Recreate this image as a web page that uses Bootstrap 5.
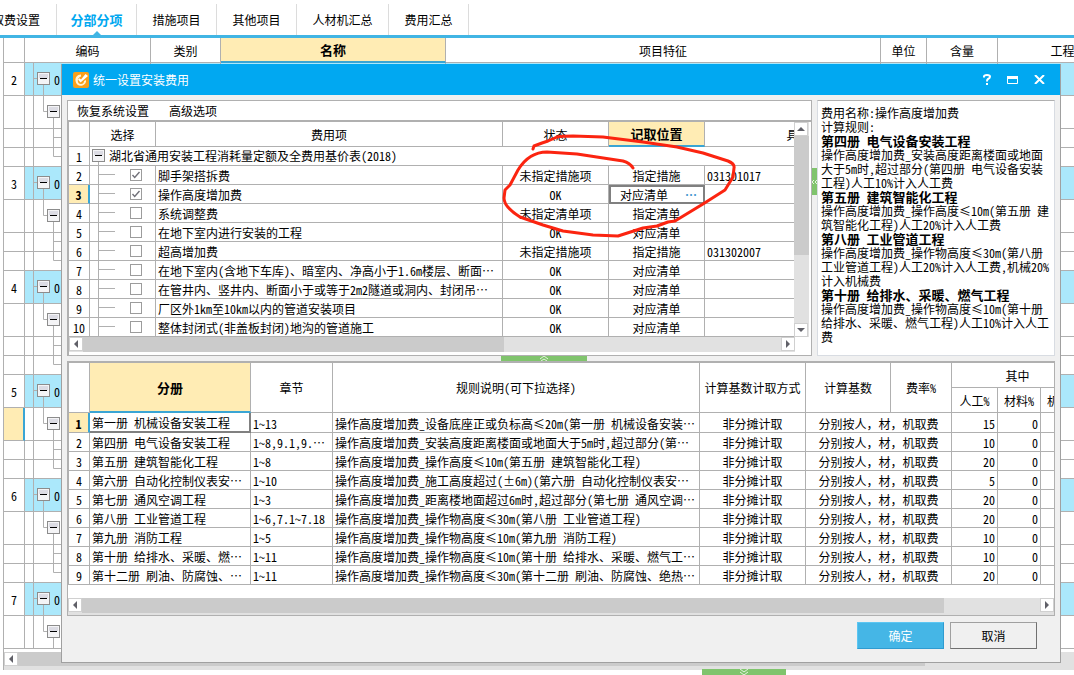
<!DOCTYPE html>
<html lang="zh-CN">
<head>
<meta charset="utf-8">
<meta name="viewport" content="width=device-width, initial-scale=1">
<title>统一设置安装费用</title>
<link href="https://cdn.jsdelivr.net/npm/bootstrap@5.3.0/dist/css/bootstrap.min.css" rel="stylesheet">
<style>
  :root { --line: #b0b0b0; --sel: #ffecb4; --accent: #41b5e4; --mark: #3aa5d4; --tree: #abe8fb; }
  body { font-family: "Noto Sans Mono CJK SC", "Noto Sans CJK SC", sans-serif; font-size: 12px; line-height: 18px; color: #000; background: #fff; }
  button { font: inherit; color: inherit; background: none; border: 0; padding: 0; }
  b, .hot { font-size: 13px; font-weight: 700; }

  .tabs { height: 38px; padding-top: 4px; margin-left: -24px; border-bottom: 3px solid var(--accent); }
  .tabs a { width: 81px; line-height: 31px; text-align: center; color: #000; text-decoration: none; border-right: 1px solid #dcdcdc; flex: none; }
  .tabs a + a { width: 80px; }
  .tabs a.wide { width: 92px; }
  .tabs a.active { color: #00a8f0; font-weight: 700; font-size: 13px; position: relative; }
  .tabs a.active::after { content: ""; position: absolute; left: 50%; bottom: 0; margin-left: -4px; border: 4px solid transparent; border-top: 0; border-bottom-color: var(--accent); }

  .gridt { table-layout: fixed; border-collapse: separate; border-spacing: 0; }
  .gridt th, .gridt td { border-right: 1px solid var(--line); border-bottom: 1px solid var(--line); padding: 1px 2px 0; height: 19px; line-height: 17px; white-space: nowrap; overflow: hidden; }
  .gridt th { font-weight: 400; text-align: center; padding-top: 0; }
  .gridt th.hot { font-weight: 700; background: var(--sel); border-bottom: 2px solid var(--mark); }
  .gridt .num { text-align: center; padding-left: 0; padding-right: 0; }
  .gridt .num.on { background: var(--sel); border-right: 2px solid var(--mark); font-weight: 700; }

  .back { margin-left: 3px; border-left: 1px solid var(--line); overflow: hidden; }
  .back .gridt { width: calc(100% + 66px); }
  .back thead th { height: 25px; }
  .back .tall td { height: 33px; }
  .back td.tree { padding: 0; position: relative; }
  .back .root td + td { background: var(--tree); }
  .back .tree svg { display: block; }
  .back .tree span { position: absolute; left: 29px; top: 8px; }

  .win { position: absolute; left: 61px; right: 13px; top: 64px; background: #f0f0f0; border: 1px solid #a0a0a0; border-top: 0; }
  .titlebar { height: 31px; background: #01a8f1; color: #fff; padding: 0 15px 0 11px; }
  .winbody { padding: 5px 5px 13px; }
  .pane { background: #fff; border: 1px solid var(--line); overflow: hidden; }
  .toolbar { height: 20px; padding-left: 9px; border-bottom: 1px solid var(--line); }
  .frame { border-top: 1px solid var(--line); border-left: 1px solid var(--line); overflow: hidden; }
  .fees { width: calc(100% + 123px); }
  .fees th { height: 25px; }
  .fees td.opt { padding: 0; }
  .opt input { appearance: none; width: 12px; height: 12px; border: 1px solid #9c9c9c; background: #fff; margin: 0 0 0 15px; }
  .opt input:checked { background: #fff url("data:image/svg+xml,%3Csvg xmlns='http://www.w3.org/2000/svg' viewBox='0 0 10 10'%3E%3Cpath d='M1.5 5l2.2 2.4L8.5 2' fill='none' stroke='%23707078' stroke-width='1.4'/%3E%3C/svg%3E") center / 10px; }
  .gridt td.edit { padding: 0 6px 0 9px; border: 2px solid #808080; line-height: 15px; }
  .gridt td.cur { border-bottom: 2px solid #808080; border-right: 2px solid #808080; }
  .dots { color: #4496d0; font-weight: 700; }

  .vbar { width: 15px; background: #e1e1e1; flex: none; }
  .vgap { width: 2px; flex: none; }
  .hrow { padding-bottom: 3px; }
  .hbar { height: 15px; background: #e1e1e1; }
  .arrow { width: 14px; height: 14px; background: #fff; border: 1px solid #d0d0d0; display: flex; align-items: center; justify-content: center; flex: none; }
  .thumb { background: #cbcbcb; }
  .grip { background: #80c46d; display: flex; align-items: center; justify-content: center; }
  .note { width: 238px; border-color: #d8dce2; border-top-color: var(--line); padding: 5px 3px; line-height: 14px; white-space: nowrap; flex: none; }
  .rules { width: calc(100% + 30px); }
  .act { width: 87px; height: 27px; border: 1px solid #a0a0a0; border-right-color: #707070; border-bottom-color: #707070; }
  .act.ok { background: #45b6e6; color: #fff; border-color: #5cc6f2 #2f9bd0 #2f9bd0 #5cc6f2; }
  .buttons { gap: 6px; padding: 6px 18px 0 0; }
  .scribble { position: absolute; right: 320px; top: 66px; pointer-events: none; }
  .foot { height: 18px; margin-top: 3px; background: #e1e1e1; }
  .bottomgrip { width: 84px; height: 6px; margin: -1px 288px 0 auto; }
</style>
</head>
<body class="overflow-hidden">

<nav class="tabs d-flex">
  <a href="#">取费设置</a><a href="#" class="active">分部分项</a><a href="#">措施项目</a><a href="#">其他项目</a><a href="#" class="wide">人材机汇总</a><a href="#">费用汇总</a>
</nav>

<main>
  <div class="back">
    <table class="gridt">
      <colgroup><col style="width:21px"><col style="width:126px"><col style="width:70px"><col style="width:225px"><col><col style="width:46px"><col style="width:71px"><col style="width:142px"></colgroup>
      <thead><tr><th></th><th>编码</th><th>类别</th><th class="hot">名称</th><th>项目特征</th><th>单位</th><th>含量</th><th>工程量</th></tr></thead>
      <tbody id="items"></tbody>
    </table>
    <div class="foot d-flex">
      <span class="arrow"><svg width="4" height="8"><path d="M4 0v8L0 4z" fill="#606068"/></svg></span>
      <div class="thumb flex-grow-1 mb-1"></div><div style="width:149px"></div>
    </div>
  </div>
  <div class="grip bottomgrip"><svg width="8" height="6"><path d="M0 0l4 3 4-3M0 3l4 3 4-3" fill="none" stroke="#e4f4df"/></svg></div>
</main>

<section class="win" role="dialog" aria-labelledby="caption">
  <header class="titlebar d-flex align-items-center">
    <svg width="16" height="16" viewBox="0 0 16 16"><rect width="16" height="16" rx="2" fill="#f9a01b"/><path d="M8 2.500C4 2.500 2 5.500 2.500 9c.5 4 4 5.500 7 4.500 2.500-1 4-3 3.500-5.500l-2 1c0 2-1 3-3 3C6 12 5 11 4.800 9 4.600 7 6 5 8 4.500z" fill="#fff4d8"/><path d="M5 7.500l2.500 3L15 4l-2.500-2L8 7.500 6.500 6.300z" fill="#fff"/></svg>
    <span id="caption" class="ms-1">统一设置安装费用</span>
    <button class="ms-auto d-flex" aria-label="帮助"><svg width="8" height="11"><path d="M1 3.500V2.500Q1 1 4 1t3 1.700Q7 4 5 5 4 5.500 4 7.500M4 9v2" fill="none" stroke="#fff" stroke-width="2"/></svg></button>
    <button class="d-flex mx-3" aria-label="最大化"><svg width="11" height="8"><path d="M.5.5h10v7H.5zM0 1.500h11" fill="none" stroke="#fff"/><path d="M0 0h11v3H0z" fill="#fff"/></svg></button>
    <button class="d-flex" aria-label="关闭"><svg width="11" height="9"><path d="M1 0l9 9M10 0L1 9" stroke="#fff" stroke-width="2"/></svg></button>
  </header>

  <div class="winbody">
    <div class="d-flex">
      <div class="pane flex-grow-1 overflow-hidden">
        <div class="toolbar d-flex gap-3 align-items-center"><button>恢复系统设置</button><button class="ms-1">高级选项</button></div>
        <div class="frame">
          <div class="d-flex">
            <div class="flex-grow-1 overflow-hidden">
              <table class="gridt fees">
                <colgroup><col style="width:21px"><col style="width:66px"><col><col style="width:106px"><col style="width:96px"><col style="width:212px"></colgroup>
                <thead><tr><th></th><th>选择</th><th>费用项</th><th>状态</th><th class="hot">记取位置</th><th>具体位置</th></tr></thead>
                <tbody id="fees"></tbody>
              </table>
            </div>
            <div class="vbar d-flex flex-column">
              <span class="arrow"><svg width="8" height="4"><path d="M0 4h8L4 0z" fill="#606068"/></svg></span>
              <div class="thumb" style="height:119px"></div>
              <span class="arrow mt-auto"><svg width="8" height="4"><path d="M0 0h8L4 4z" fill="#606068"/></svg></span>
            </div>
            <div class="vgap"></div>
          </div>
          <div class="hrow d-flex">
            <div class="hbar d-flex flex-grow-1">
              <span class="arrow"><svg width="4" height="8"><path d="M4 0v8L0 4z" fill="#606068"/></svg></span>
              <div class="thumb" style="width:58%"></div>
              <span class="arrow ms-auto"><svg width="4" height="8"><path d="M0 0v8l4-4z" fill="#606068"/></svg></span>
            </div>
            <div class="px-2"></div>
          </div>
        </div>
      </div>
      <div class="d-flex align-items-start" style="width:5px"><div class="grip w-100" style="height:27px;margin-top:68px"><svg width="5" height="6"><path d="M2 1L0 3l2 2M5 1L3 3l2 2" fill="none" stroke="#e4f4df"/></svg></div></div>
      <div class="pane note">费用名称:操作高度增加费<br>计算规则:<br><b>第四册 电气设备安装工程</b><br>操作高度增加费_安装高度距离楼面或地面<br>大于5m时,超过部分(第四册 电气设备安装<br>工程)人工10%计入人工费<br><b>第五册 建筑智能化工程</b><br>操作高度增加费_操作高度≤10m(第五册 建<br>筑智能化工程)人工20%计入人工费<br><b>第八册 工业管道工程</b><br>操作高度增加费_操作物高度≤30m(第八册<br>工业管道工程)人工20%计入人工费,机械20%<br>计入机械费<br><b>第十册 给排水、采暖、燃气工程</b><br>操作高度增加费_操作物高度≤10m(第十册<br>给排水、采暖、燃气工程)人工10%计入人工<br>费</div>
    </div>

    <div class="d-flex justify-content-center" style="height:5px;padding-right:35px"><div class="grip" style="width:86px"><svg width="8" height="5"><path d="M0 3l4-3 4 3M1 5l3-2 3 2" fill="none" stroke="#e4f4df"/></svg></div></div>

    <div class="pane">
      <div class="frame">
        <table class="gridt rules">
          <colgroup><col style="width:21px"><col style="width:161px"><col style="width:82px"><col><col style="width:106px"><col style="width:85px"><col style="width:61px"><col style="width:46px"><col style="width:43px"><col style="width:43px"></colgroup>
          <thead>
            <tr><th rowspan="2"></th><th rowspan="2" class="hot">分册</th><th rowspan="2">章节</th><th rowspan="2">规则说明(可下拉选择)</th><th rowspan="2">计算基数计取方式</th><th rowspan="2">计算基数</th><th rowspan="2">费率%</th><th colspan="3" style="height:25px">其中</th></tr>
            <tr><th style="height:25px">人工%</th><th>材料%</th><th>机械%</th></tr>
          </thead>
          <tbody id="rules"></tbody>
        </table>
      </div>
      <div class="hbar d-flex" style="margin-top:13px">
        <span class="arrow"><svg width="4" height="8"><path d="M4 0v8L0 4z" fill="#606068"/></svg></span>
        <div class="thumb" style="width:87.4%"></div>
        <span class="arrow ms-auto"><svg width="4" height="8"><path d="M0 0v8l4-4z" fill="#606068"/></svg></span>
      </div>
      <div class="hbar" style="height:2px"></div>
    </div>

    <div class="buttons d-flex justify-content-end"><button class="act ok">确定</button><button class="act">取消</button></div>
  </div>

  <svg class="scribble" width="240" height="112" viewBox="500 130 240 112" fill="none" stroke="#fb2410" stroke-width="3" stroke-linecap="round" stroke-linejoin="round"><path d="M533 149L534 146 542 143 548 141 557 137Q563 136 573 136L603 137 643 142 677 147 703 153 728 161Q735 164 734 168L733 177 725 190 703 204 675 221 668 222 657 226 643 228 618 236 593 235 563 231 543 225 520 217Q504 207 504 198L505 190 510 185 518 170Q529 152 547 152L577 154 623 161Q630 163 633 168"/></svg>
</section>

<script>
// Tree of bill items: each section has a root row, a child row and two leaf rows.
const box = (x, y) => `<rect x="${x + .5}" y="${y + .5}" width="12" height="12" fill="#f4f4f6" stroke="#8c8c8c"/><path d="M${x + 2} ${y + 2}h9v4h-9z" fill="#dcdce4"/><path d="M${x + 3} ${y + 6.5}h7" stroke="#000"/>`;
const tree = (h, lines, b) => `<svg width="60" height="${h}" fill="none"><path d="M8.500 0v${h}${lines}" stroke="#b0b0b0"/>${b || ''}</svg>`;
const rest = '<td></td>'.repeat(6);
let items = '';
for (let n = 2; n <= 7; n++) {
  items += `<tr class="tall root"><td class="num">${n}</td><td class="tree">${tree(32, 'M8 15.500h4M18.500 22v10', box(12, 9))}<span>0</span></td>${rest}</tr>
    <tr class="tall"><td class="num${n === 5 ? ' on' : ''}"></td><td class="tree">${tree(32, 'M18.500 0v15.500h4M28.500 22v10', box(22, 9))}</td>${rest}</tr>`;
  if (n < 7) items += `<tr><td></td><td class="tree">${tree(18, 'M28.500 0v18M28.500 8.500h10')}</td>${rest}</tr>
    <tr><td></td><td class="tree">${tree(18, 'M28.500 0v8.500h10')}</td>${rest}</tr>`;
}
document.getElementById('items').innerHTML = items;

const fees = [
  ['脚手架搭拆费', '未指定措施项', '指定措施', '031301017', 1],
  ['操作高度增加费', 'OK', '对应清单', '', 1],
  ['系统调整费', '未指定清单项', '指定清单', ''],
  ['在地下室内进行安装的工程', 'OK', '对应清单', ''],
  ['超高增加费', '未指定措施项', '指定措施', '031302007'],
  ['在地下室内(含地下车库)、暗室内、净高小于1.6m楼层、断面…', 'OK', '对应清单', ''],
  ['在管井内、竖井内、断面小于或等于2m2隧道或洞内、封闭吊…', 'OK', '对应清单', ''],
  ['厂区外1km至10km以内的管道安装项目', 'OK', '对应清单', ''],
  ['整体封闭式(非盖板封闭)地沟的管道施工', 'OK', '对应清单', '']
];
document.getElementById('fees').innerHTML =
  `<tr><td class="num">1</td><td colspan="5" style="padding:0"><div class="d-flex"><svg width="19" height="18" fill="none"><path d="M8.500 14v4" stroke="#b0b0b0"/>${box(2, 2)}</svg>湖北省通用安装工程消耗量定额及全费用基价表(2018)</div></td></tr>` +
  fees.map((f, i) => {
    const cur = i === 1;
    const place = cur
      ? `<td class="edit"><div class="d-flex justify-content-between"><span>${f[2]}</span><button class="dots" aria-label="选择位置">⋯</button></div></td>`
      : `<td class="text-center">${f[2]}</td>`;
    return `<tr><td class="num${cur ? ' on' : ''}">${i + 2}</td><td class="opt"><div class="d-flex align-items-center"><svg width="25" height="18" fill="none"><path d="M8.500 0v18M8 8.500h17" stroke="#b0b0b0"/></svg><input type="checkbox" aria-label="${f[0]}"${f[4] ? ' checked' : ''}></div></td><td>${f[0]}</td><td class="text-center">${f[1]}</td>${place}<td>${f[3]}</td></tr>`;
  }).join('');

const rules = [
  ['第一册 机械设备安装工程', '1~13', '设备底座正或负标高≤20m(第一册 机械设备安装…', 15],
  ['第四册 电气设备安装工程', '1~8,9.1,9.…', '安装高度距离楼面或地面大于5m时,超过部分(第…', 10],
  ['第五册 建筑智能化工程', '1~8', '操作高度≤10m(第五册 建筑智能化工程)', 20],
  ['第六册 自动化控制仪表安…', '1~10', '施工高度超过(±6m)(第六册 自动化控制仪表安…', 5],
  ['第七册 通风空调工程', '1~3', '距离楼地面超过6m时,超过部分(第七册 通风空调…', 20],
  ['第八册 工业管道工程', '1~6,7.1~7.18', '操作物高度≤30m(第八册 工业管道工程)', 20],
  ['第九册 消防工程', '1~5', '操作物高度≤10m(第九册 消防工程)', 10],
  ['第十册 给排水、采暖、燃…', '1~11', '操作物高度≤10m(第十册 给排水、采暖、燃气工…', 10],
  ['第十二册 刷油、防腐蚀、…', '1~11', '操作物高度≤30m(第十二册 刷油、防腐蚀、绝热…', 20]
];
document.getElementById('rules').innerHTML = rules.map((r, i) =>
  `<tr><td class="num${i ? '' : ' on'}">${i + 1}</td><td${i ? '' : ' class="cur"'}>${r[0]}</td><td>${r[1]}</td><td>操作高度增加费_${r[2]}</td><td class="text-center">非分摊计取</td><td colspan="2" class="text-center">分别按人，材，机取费</td><td class="text-end">${r[3]}</td><td class="text-end">0</td><td></td></tr>`).join('');
</script>
<script src="https://cdn.jsdelivr.net/npm/bootstrap@5.3.0/dist/js/bootstrap.bundle.min.js"></script>
</body>
</html>
